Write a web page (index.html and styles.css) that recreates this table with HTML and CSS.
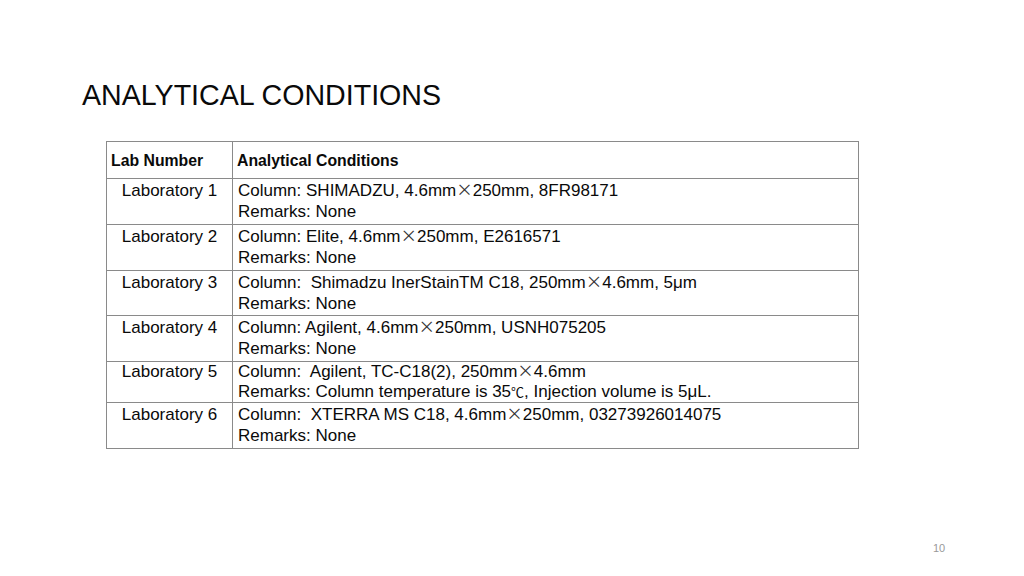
FILE: index.html
```html
<!DOCTYPE html>
<html>
<head>
<meta charset="utf-8">
<link rel="stylesheet" href="styles.css">
</head>
<body>
<div class="slide">
  <h1 class="title">ANALYTICAL CONDITIONS</h1>
  <table class="cond">
    <tr class="head">
      <th class="c1">Lab Number</th>
      <th class="c2">Analytical Conditions</th>
    </tr>
    <tr class="row">
      <td class="lab">Laboratory 1</td>
      <td class="desc">Column: SHIMADZU, 4.6mm<span class="x">×</span>250mm, 8FR98171<br>Remarks: None</td>
    </tr>
    <tr class="row">
      <td class="lab">Laboratory 2</td>
      <td class="desc">Column: Elite, 4.6mm<span class="x">×</span>250mm, E2616571<br>Remarks: None</td>
    </tr>
    <tr class="row">
      <td class="lab">Laboratory 3</td>
      <td class="desc">Column:&nbsp; Shimadzu InerStainTM C18, 250mm<span class="x">×</span>4.6mm, 5μm<br>Remarks: None</td>
    </tr>
    <tr class="row">
      <td class="lab">Laboratory 4</td>
      <td class="desc">Column: Agilent, 4.6mm<span class="x">×</span>250mm, USNH075205<br>Remarks: None</td>
    </tr>
    <tr class="row short">
      <td class="lab">Laboratory 5</td>
      <td class="desc">Column:&nbsp; Agilent, TC-C18(2), 250mm<span class="x">×</span>4.6mm<br>Remarks: Column temperature is 35<span class="deg">℃</span>, Injection volume is 5μL.</td>
    </tr>
    <tr class="row">
      <td class="lab">Laboratory 6</td>
      <td class="desc">Column:&nbsp; XTERRA MS C18, 4.6mm<span class="x">×</span>250mm, 03273926014075<br>Remarks: None</td>
    </tr>
  </table>
  <div class="pagenum">10</div>
</div>
</body>
</html>
```
FILE: styles.css
```css
html, body {
  margin: 0;
  padding: 0;
  background: #fff;
}
.slide {
  width: 1024px;
  height: 576px;
  position: relative;
  font-family: "Liberation Sans", Arial, sans-serif;
  color: #0a0a0a;
  overflow: hidden;
}
.title {
  margin: 0;
  padding: 80px 0 0 82px;
  font-size: 28.6px;
  font-weight: normal;
  line-height: 30px;
  color: #0a0a0a;
}
.cond {
  margin: 31px 0 0 106px;
  width: 753px;
  border-collapse: collapse;
  border: 1px solid #8a8a8a;
}
.cond th, .cond td {
  border: 1px solid #8a8a8a;
  padding: 0;
}
.head th {
  height: 35px;
  text-align: left;
  font-size: 15.8px;
  font-weight: bold;
  vertical-align: middle;
  padding-top: 1px;
}
.head .c1 {
  width: 121px;
  padding-left: 4px;
}
.head .c2 {
  padding-left: 4px;
}
.row td {
  height: 43.8px;
  vertical-align: top;
  font-size: 17px;
  line-height: 21px;
  padding-top: 1px;
}
.row.short td {
  height: 40px;
  line-height: 20px;
  padding-top: 0;
}
.lab {
  text-align: center;
}
.desc {
  padding-left: 5px !important;
}
.x {
  font-family: "Noto Sans CJK JP", sans-serif;
  font-size: 16.5px;
  line-height: 0;
  color: #333;
}
.deg {
  font-family: "Noto Sans CJK JP", sans-serif;
  font-size: 13px;
  line-height: 0;
}
.pagenum {
  position: absolute;
  left: 933px;
  top: 542px;
  font-size: 11px;
  color: #999;
}
```
